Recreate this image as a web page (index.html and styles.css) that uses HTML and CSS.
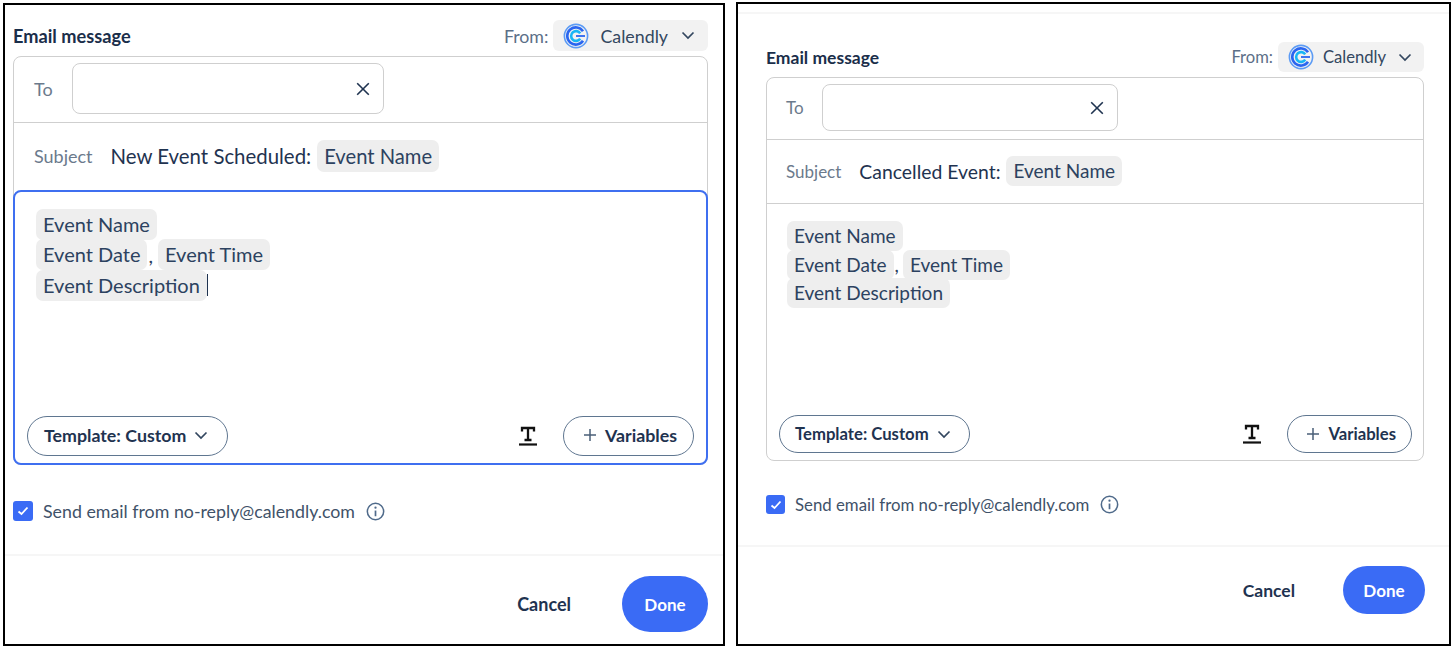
FILE: index.html
```html
<!doctype html>
<html lang="en">
<head>
	<meta charset="UTF-8">
	<title>Email message</title>
	<link rel="stylesheet" href="styles.css">
</head>
<body>
	<svg class="defs" width="0" height="0" aria-hidden="true">
		<symbol id="logo" viewBox="0 0 26 26">
			<circle cx="13" cy="13" r="11.6" fill="none" stroke="#5b9bf5" stroke-width="1.6"/>
			<path d="M20 8.2A8.6 8.6 0 1 0 20 17.8" fill="none" stroke="#2a66f0" stroke-width="2.6"/>
			<path d="M17.2 10.4A4.9 4.9 0 1 0 17.2 15.6" fill="none" stroke="#18b6f5" stroke-width="2.6"/>
			<path d="M13 13H22" stroke="#2a66f0" stroke-width="1.8"/>
		</symbol>
		<symbol id="chev" viewBox="0 0 14 9">
			<path d="M1.5 1.5L7 7L12.5 1.5" fill="none" stroke="currentColor" stroke-width="1.7"/>
		</symbol>
		<symbol id="cross" viewBox="0 0 14 14">
			<path d="M1.2 1.2L12.8 12.8M12.8 1.2L1.2 12.8" fill="none" stroke="currentColor" stroke-width="1.6"/>
		</symbol>
		<symbol id="plus" viewBox="0 0 14 14">
			<path d="M7 1V13M1 7H13" fill="none" stroke="currentColor" stroke-width="1.5"/>
		</symbol>
		<symbol id="info" viewBox="0 0 20 20">
			<circle cx="10" cy="10" r="8.6" fill="none" stroke="currentColor" stroke-width="1.6"/>
			<circle cx="10" cy="6" r="1.2" fill="currentColor"/>
			<path d="M10 9V15" stroke="currentColor" stroke-width="1.8"/>
		</symbol>
		<symbol id="textstyle" viewBox="0 0 18 20">
			<path d="M3 5.5V2H15V5.5M9 2V14M5.5 14H12.5" fill="none" stroke="#111" stroke-width="2.3"/>
			<path d="M0 18.5H18" stroke="#111" stroke-width="2.2"/>
		</symbol>
		<symbol id="tick" viewBox="0 0 12 10">
			<path d="M1.5 5.5L4.5 8L10.5 1.5" fill="none" stroke="#fff" stroke-width="1.8"/>
		</symbol>
	</svg>

	<div class="panels">

		<section class="panel panel-left">
			<div class="panel-main">
				<div class="head">
					<h2 class="head-title">Email message</h2>
					<div class="from">
						<span class="from-label">From:</span>
						<div class="from-select">
							<svg class="logo"><use href="#logo"/></svg>
							<span>Calendly</span>
							<svg class="chev"><use href="#chev"/></svg>
						</div>
					</div>
				</div>

				<div class="card">
					<div class="row-to">
						<span class="field-label">To</span>
						<div class="to-input"><svg class="cross"><use href="#cross"/></svg></div>
					</div>
					<div class="row-subject">
						<span class="field-label">Subject</span>
						<span class="subject-text">New Event Scheduled:</span>
						<span class="chip">Event Name</span>
					</div>
					<div class="editor editor-focus">
						<div class="editor-lines">
							<div class="line"><span class="chip">Event Name</span></div>
							<div class="line"><span class="chip">Event Date</span><span class="comma">,</span><span class="chip">Event Time</span></div>
							<div class="line"><span class="chip">Event Description</span><span class="caret"></span></div>
						</div>
						<div class="editor-tools">
							<button class="pill">Template: Custom <svg class="chev"><use href="#chev"/></svg></button>
							<div class="tools-right">
								<svg class="textstyle"><use href="#textstyle"/></svg>
								<button class="pill"><svg class="plus"><use href="#plus"/></svg> Variables</button>
							</div>
						</div>
					</div>
				</div>

				<div class="send-row">
					<span class="check"><svg class="tick"><use href="#tick"/></svg></span>
					<span>Send email from no-reply@calendly.com</span>
					<svg class="info"><use href="#info"/></svg>
				</div>
			</div>
			<div class="foot">
				<button class="btn-cancel">Cancel</button>
				<button class="btn-done">Done</button>
			</div>
		</section>

		<section class="panel panel-right">
			<div class="top-rule"></div>
			<div class="panel-main">
				<div class="head">
					<h2 class="head-title">Email message</h2>
					<div class="from">
						<span class="from-label">From:</span>
						<div class="from-select">
							<svg class="logo"><use href="#logo"/></svg>
							<span>Calendly</span>
							<svg class="chev"><use href="#chev"/></svg>
						</div>
					</div>
				</div>

				<div class="card">
					<div class="row-to">
						<span class="field-label">To</span>
						<div class="to-input"><svg class="cross"><use href="#cross"/></svg></div>
					</div>
					<div class="row-subject">
						<span class="field-label">Subject</span>
						<span class="subject-text">Cancelled Event:</span>
						<span class="chip">Event Name</span>
					</div>
					<div class="editor">
						<div class="editor-lines">
							<div class="line"><span class="chip">Event Name</span></div>
							<div class="line"><span class="chip">Event Date</span><span class="comma">,</span><span class="chip">Event Time</span></div>
							<div class="line"><span class="chip">Event Description</span></div>
						</div>
						<div class="editor-tools">
							<button class="pill">Template: Custom <svg class="chev"><use href="#chev"/></svg></button>
							<div class="tools-right">
								<svg class="textstyle"><use href="#textstyle"/></svg>
								<button class="pill"><svg class="plus"><use href="#plus"/></svg> Variables</button>
							</div>
						</div>
					</div>
				</div>

				<div class="send-row">
					<span class="check"><svg class="tick"><use href="#tick"/></svg></span>
					<span>Send email from no-reply@calendly.com</span>
					<svg class="info"><use href="#info"/></svg>
				</div>
			</div>
			<div class="foot">
				<button class="btn-cancel">Cancel</button>
				<button class="btn-done">Done</button>
			</div>
		</section>

	</div>
</body>
</html>
```

FILE: styles.css
```css
* {
	box-sizing: border-box;
}

html, body {
	margin: 0;
	padding: 0;
	background: #fff;
}

body {
	font-family: "Lato", "Liberation Sans", sans-serif;
	color: #1f3350;
	overflow: hidden;
}

.defs {
	position: absolute;
}

.panels {
	display: flex;
	align-items: flex-start;
	height: 647px;
	padding: 2px 2px 0 3px;
	gap: 11px;
}

.panel {
	display: flex;
	flex-direction: column;
	border: 2px solid #000;
	background: #fff;
}

/* sizes of each capture */
.panel-left {
	width: 722px;
	height: 643px;
	margin-top: 1px;
	--pad-left: 8px;
	--pad-right: 15px;
	--pad-top: 15px;
	--head-h: 31px;
	--card-h: 409px;
	--to-h: 66px;
	--sub-h: 68px;
	--sub-pad: 3px;
	--sub-chip: 32px;
	--sub-chip-font: 20.2px;
	--sub-text: 20.4px;
	--to-w: 312px;
	--to-input-h: 51px;
	--to-label-w: 38px;
	--row-left: 20px;
	--title: 18.2px;
	--text: 20px;
	--label: 18px;
	--small: 17.8px;
	--from-font: 17.8px;
	--logo-gap: 11px;
	--from-chev: 13px;
	--from-right: 13px;
	--send-gap: 35px;
	--check: 20px;
	--foot-h: 90px;
	--foot-top: 20px;
	--foot-gap: 51px;
	--foot-right: 15px;
	--done-w: 86px;
	--done-h: 56px;
	--cancel: 18px;
	--pill-h: 40px;
	--pill-font: 17.8px;
	--pill-pad: 16px;
	--pill-bottom: 2px;
	--line-h: 30.5px;
	--chip-h: 31px;
	--editor-top: 17px;
	--tools-left: -9px;
	--tools-right: 0px;
	--comma-right: 5px;
	--comma-left: 1px;
}

.panel-right {
	width: 715px;
	height: 644px;
	--pad-left: 28px;
	--pad-right: 25px;
	--pad-top: 28px;
	--head-h: 30px;
	--card-h: 384px;
	--to-h: 62px;
	--sub-h: 63px;
	--sub-pad: 1px;
	--sub-chip: 30px;
	--sub-chip-font: 19px;
	--sub-text: 19.4px;
	--to-w: 296px;
	--to-input-h: 47px;
	--to-label-w: 36px;
	--row-left: 19px;
	--title: 17.5px;
	--text: 19px;
	--label: 17px;
	--small: 16.8px;
	--from-font: 16.6px;
	--logo-gap: 9px;
	--from-chev: 12px;
	--from-right: 12px;
	--send-gap: 33px;
	--check: 19px;
	--foot-h: 99px;
	--foot-top: 19px;
	--foot-gap: 48px;
	--foot-right: 24px;
	--done-w: 82px;
	--done-h: 48px;
	--cancel: 17.5px;
	--pill-h: 38px;
	--pill-font: 16.7px;
	--pill-pad: 15px;
	--pill-bottom: 0px;
	--line-h: 28.5px;
	--chip-h: 30px;
	--editor-top: 18px;
	--tools-left: -8px;
	--tools-right: -1px;
	--comma-right: 4px;
	--comma-left: 1px;
}

.top-rule {
	height: 2px;
	margin-top: 8px;
	background: #f6f6f6;
}

.panel-main {
	flex: 1;
	padding: var(--pad-top) var(--pad-right) 0 var(--pad-left);
}

/* header */
.head {
	display: flex;
	align-items: center;
	justify-content: space-between;
	height: var(--head-h);
	margin-bottom: 5px;
}

.head-title {
	margin: 0;
	font-size: var(--title);
	font-weight: 700;
	color: #1a2e4a;
}

.from {
	display: flex;
	align-items: center;
	gap: 5px;
	height: 100%;
}

.from-label {
	font-size: var(--from-font);
	color: #5c6f88;
}

.from-select {
	display: flex;
	align-items: center;
	height: 100%;
	padding: 0 var(--from-right) 0 10px;
	border-radius: 6px;
	background: #f2f2f2;
	font-size: var(--from-font);
	color: #33475f;
}

.logo {
	width: 26px;
	height: 26px;
	margin-right: var(--logo-gap);
}

.chev {
	width: 14px;
	height: 9px;
	color: #33475f;
}

.from-select .chev {
	margin-left: var(--from-chev);
}

/* card */
.card {
	display: flex;
	flex-direction: column;
	height: var(--card-h);
	border: 1px solid #cfcfcf;
	border-radius: 8px;
}

.field-label {
	font-size: var(--label);
	color: #6b7a8c;
}

.row-to {
	display: flex;
	align-items: center;
	height: var(--to-h);
	padding: 0 0 2px var(--row-left);
	border-bottom: 1px solid #cfcfcf;
}

.row-to .field-label {
	flex: none;
	width: var(--to-label-w);
}

.to-input {
	display: flex;
	align-items: center;
	justify-content: flex-end;
	width: var(--to-w);
	height: var(--to-input-h);
	padding-right: 13px;
	border: 1px solid #cfcfcf;
	border-radius: 8px;
}

.cross {
	width: 14px;
	height: 14px;
	color: #1f3350;
}

.row-subject {
	display: flex;
	align-items: center;
	height: var(--sub-h);
	padding: 0 0 var(--sub-pad) var(--row-left);
	gap: 18px;
}

.subject-text {
	font-size: var(--sub-text);
	margin-right: -12px;
}

.chip {
	display: inline-block;
	padding: 0 7px;
	border-radius: 7px;
	background: #eeeeee;
	font-size: var(--text);
	line-height: var(--chip-h);
	color: #2c4260;
}

.row-subject .chip {
	font-size: var(--sub-chip-font);
	line-height: var(--sub-chip);
}

/* editor */
.editor {
	flex: 1;
	display: flex;
	flex-direction: column;
	justify-content: space-between;
	padding: var(--editor-top) 12px 7px 20px;
	border-top: 1px solid #cfcfcf;
}

.editor-focus {
	margin: -1px;
	padding-left: 21px;
	border: 2px solid #3f6ff0;
	border-radius: 8px;
}

.line {
	display: flex;
	align-items: center;
	height: var(--line-h);
}

.comma {
	margin: 0 var(--comma-right) 0 var(--comma-left);
	font-size: var(--text);
	color: #2c4260;
}

.caret {
	width: 1px;
	height: 22px;
	background: #1f3350;
}

.editor-tools {
	display: flex;
	align-items: center;
	justify-content: space-between;
	margin: 0 var(--tools-right) 0 var(--tools-left);
}

.tools-right {
	display: flex;
	align-items: center;
	gap: 26px;
}

.textstyle {
	width: 18px;
	height: 20px;
}

.pill {
	display: flex;
	align-items: center;
	gap: 8px;
	height: var(--pill-h);
	padding: 0 var(--pill-pad) var(--pill-bottom);
	border: 1px solid #5f7690;
	border-radius: 20px;
	background: #fff;
	font-family: inherit;
	font-size: var(--pill-font);
	font-weight: 700;
	color: #1f3350;
}

.pill .chev {
	margin-right: 3px;
}

.plus {
	width: 14px;
	height: 14px;
	margin-left: 3px;
	color: #4a5f78;
}

/* send from */
.send-row {
	display: flex;
	align-items: center;
	margin-top: var(--send-gap);
	font-size: var(--small);
	color: #3f5269;
}

.check {
	display: flex;
	align-items: center;
	justify-content: center;
	width: var(--check);
	height: var(--check);
	margin-right: 10px;
	border-radius: 3px;
	background: #3a6bf5;
}

.tick {
	width: 12px;
	height: 10px;
}

.info {
	width: 19px;
	height: 19px;
	margin-left: 11px;
	color: #4f6a8a;
}

/* footer */
.foot {
	display: flex;
	align-items: flex-start;
	justify-content: flex-end;
	height: var(--foot-h);
	padding: var(--foot-top) var(--foot-right) 0 0;
	gap: var(--foot-gap);
	border-top: 2px solid #f6f6f6;
}

.btn-cancel {
	height: var(--done-h);
	padding: 0;
	border: none;
	background: none;
	font-family: inherit;
	font-size: var(--cancel);
	font-weight: 700;
	color: #1f3350;
}

.btn-done {
	width: var(--done-w);
	height: var(--done-h);
	border: none;
	border-radius: 28px;
	background: #3a6bf5;
	font-family: inherit;
	font-size: 17px;
	font-weight: 700;
	color: #fff;
}
```
